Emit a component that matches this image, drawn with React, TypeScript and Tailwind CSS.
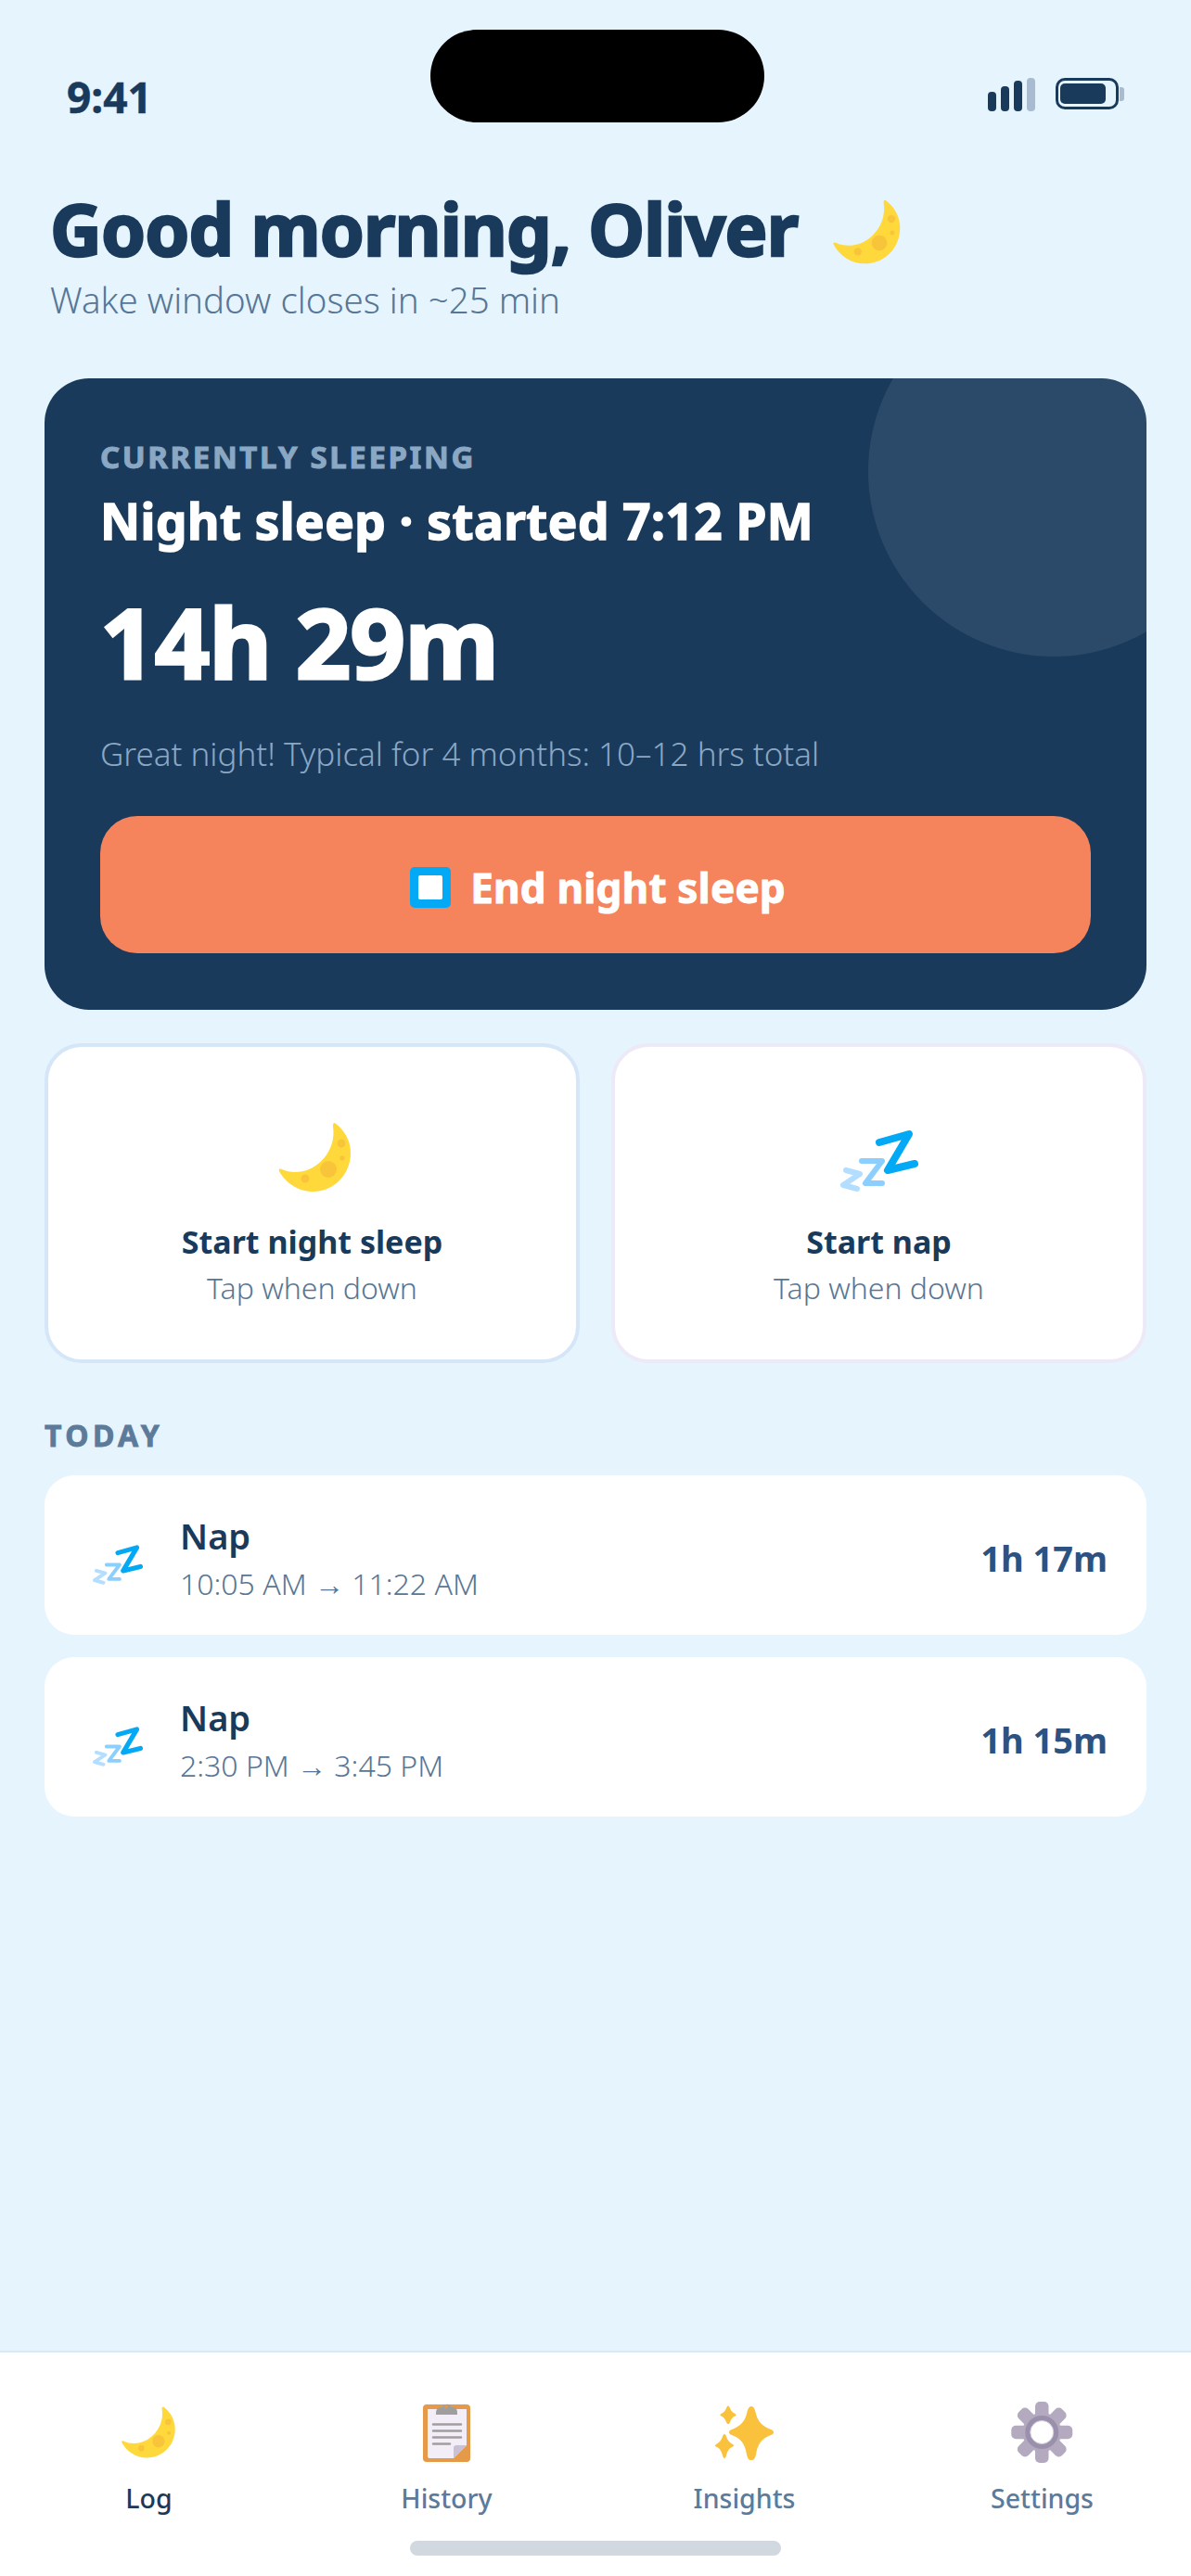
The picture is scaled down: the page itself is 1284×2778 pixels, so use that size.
const font = { fontFamily: '"Noto Sans", sans-serif' }

function Moon({ className }: { className: string }) {
  return (
    <svg viewBox="18 30 84 78" className={className}>
      <path d="M81 32C92 40 98 52 98 64C98 88 80 106 57 106C42 106 28 97 21 84C20 81 22 81 24 82C28 84 33 85 38 85C62 85 83 62 79 36C79 33 79 32 81 32Z" fill="#ffd83b" />
      <circle cx="74" cy="82" r="9" fill="#f8c53a" />
      <circle cx="88" cy="54" r="4.5" fill="#f8c53a" />
      <circle cx="89" cy="70" r="2.7" fill="#f8c53a" />
      <circle cx="49" cy="92" r="4.5" fill="#f8c53a" />
    </svg>
  )
}

function Zzz({ className }: { className: string }) {
  return (
    <svg viewBox="12 18 90 70" className={className} fill="none" strokeLinecap="round" strokeLinejoin="round">
      <path d="M21 63L36 67L18 79L33 83" stroke="#b3deff" strokeWidth="6" />
      <path d="M38 53H60L42 77H60" stroke="#8ccfff" strokeWidth="6" />
      <path d="M57 33L89 24L66 63L95 56" stroke="#03a9f4" strokeWidth="8" />
    </svg>
  )
}

function Clipboard({ className }: { className: string }) {
  return (
    <svg viewBox="22 18 60 68" className={className}>
      <rect x="26" y="22" width="51" height="62" rx="4" fill="#e59a4a" />
      <path d="M31 27H73V66L59 80H33Q31 80 31 78Z" fill="#f2edf7" />
      <path d="M59 80V69Q59 66 62 66H73Z" fill="#c8c0d6" />
      <path d="M40 31Q40 25 46 25H47A5.500 5.500 0 0 1 57 25H58Q63 25 63 31V33H40Z" fill="#9e9e9e" />
      <circle cx="51" cy="24" r="2" fill="#e59a4a" />
      <path d="M37 43.500H67M37 50.500H67M37 57.500H67M37 64.500H55" stroke="#9e9e9e" strokeWidth="2.500" strokeLinecap="round" />
    </svg>
  )
}

function Sparkles({ className }: { className: string }) {
  return (
    <svg viewBox="18 18 70 68" className={className} fill="#fac23c">
      <path d="M60 24C63 24 64 28 65 32C67 40 71 45 81 49C85 50 85 54 81 55C71 59 67 64 65 76C64 80 63 82 60 82C57 82 56 80 55 76C53 64 49 59 39 55C35 54 35 50 39 49C49 45 53 40 55 32C56 28 57 24 60 24Z" />
      <path d="M35 23.500C36 23.500 36.500 25 37 26C38 29 40 31 42.500 32C44 33 44 34 42.500 34.500C40 35.500 38 38 37 41C36.500 42.500 36 43 35 43C34 43 33.500 42.500 33 41C32 38 30 35.500 27.500 34.500C26 34 26 33 27.500 32C30 31 32 29 33 26C33.500 25 34 23.500 35 23.500Z" />
      <path d="M31 54C32 54 32.500 55 33 56.500C34 60 36 63 40 65C41.500 66 41.500 67 40 67.500C36 69 34 73 33 77C32.500 79 32 80 31 80C30 80 29.500 79 29 77C28 73 26 69 22 67.500C20.500 67 20.500 66 22 65C26 63 28 60 29 56.500C29.500 55 30 54 31 54Z" />
    </svg>
  )
}

function Gear({ className }: { className: string }) {
  const spokes = [0, 45, 90, 135, 180, 225, 270, 315]
  return (
    <svg viewBox="20 18 67 68" className={className}>
      {spokes.map((a) => (
        <rect key={a} x="46" y="19" width="14.500" height="24" rx="5" fill="#b3aac0" transform={`rotate(${a} 53.250 52)`} />
      ))}
      <circle cx="53.250" cy="52" r="21" fill="#b3aac0" />
      <circle cx="53.250" cy="52" r="18" fill="#9a90ab" />
      <circle cx="53.250" cy="52" r="12.500" fill="#fff" stroke="#cfc8da" strokeWidth="1" />
    </svg>
  )
}

function StartCard({ icon, title, border }: { icon: React.ReactNode; title: string; border: string }) {
  return (
    <div className={`flex h-[345px] flex-col items-center rounded-[40px] border-4 bg-white ${border}`}>
      <div className="mt-[78px] flex h-[82px] items-center justify-center">{icon}</div>
      <div className="mt-[27px] text-[34px] leading-[46px] font-bold text-[#1a3a5c]">{title}</div>
      <div className="mt-[7px] text-[32px] leading-[40px] font-light text-[#587695]">Tap when down</div>
    </div>
  )
}

function NapRow({ time, length }: { time: string; length: string }) {
  return (
    <div className="flex h-[172px] items-center rounded-[32px] bg-white pr-[42px] pl-[50px]">
      <Zzz className="mt-[20px] h-[45px] w-[58px] shrink-0" />
      <div className="ml-[38px] flex-1 pt-[6px]">
        <div className="text-[38px] leading-[48px] font-semibold text-[#1a3a5c]">Nap</div>
        <div className="mt-[8px] text-[32px] leading-[40px] font-light text-[#587695]">{time}</div>
      </div>
      <div className="pt-[6px] text-[38px] leading-[48px] font-bold text-[#2c5282]">{length}</div>
    </div>
  )
}

function NavItem({ icon, label, active }: { icon: React.ReactNode; label: string; active?: boolean }) {
  return (
    <div className="flex flex-1 flex-col items-center">
      <div className="flex h-[68px] items-center justify-center">{icon}</div>
      <div className={`mt-[17px] text-[28.5px] leading-[40px] font-medium ${active ? "text-[#1a3a5c]" : "text-[#5c7a99]"}`}>{label}</div>
    </div>
  )
}

export default function App() {
  return (
    <div style={font} className="flex h-[2778px] w-[1284px] flex-col overflow-hidden bg-[#e6f4fe] text-[#1a3a5c]">
      {/* Status bar */}
      <div className="relative flex h-[197px] shrink-0 items-start justify-between pt-[76px] pr-[72px] pl-[72px]">
        <div className="text-[46px] leading-[56px] font-bold [-webkit-text-stroke:0.5px_#1a3a5c]">9:41</div>
        <div className="absolute top-[32px] left-[464px] h-[100px] w-[360px] rounded-[50px] bg-black" />
        <div className="flex items-start gap-[22px] pt-[8px]">
          <div className="flex items-end gap-[5px]">
            <div className="h-[21px] w-[9px] rounded-[4px] bg-[#1a3a5c]" />
            <div className="h-[27px] w-[9px] rounded-[4px] bg-[#1a3a5c]" />
            <div className="h-[33px] w-[9px] rounded-[4px] bg-[#1a3a5c]" />
            <div className="h-[36px] w-[9px] rounded-[4px] bg-[#a9bbd0]" />
          </div>
          <div className="flex items-center gap-[1px]">
            <div className="flex h-[34px] w-[68px] items-center rounded-[10px] border-[3px] border-[#1a3a5c] pl-[2px]">
              <div className="h-[22px] w-[49px] rounded-[5px] bg-[#1a3a5c]" />
            </div>
            <div className="h-[15px] w-[5px] rounded-r-[3px] bg-[#a9bbd0]" />
          </div>
        </div>
      </div>

      {/* Greeting */}
      <div className="px-[54px]">
        <div className="flex items-center text-[77px] leading-[100px] font-bold tracking-[-0.85px] [-webkit-text-stroke:2.5px_#1a3a5c]">
          Good morning, Oliver
          <Moon className="mt-[6px] ml-[36px] h-[74px] w-[78px]" />
        </div>
        <div className="mt-[1px] text-[38.5px] leading-[50px] font-light text-[#587695]">Wake window closes in ~25 min</div>
      </div>

      <div className="mt-[60px] flex flex-col px-[48px]">
        {/* Current sleep */}
        <div className="relative h-[681px] overflow-hidden rounded-[48px] bg-[#1a3a5c] p-[60px]">
          <div className="absolute top-[-100px] right-[-100px] h-[400px] w-[400px] rounded-full bg-white/8" />
          <div className="relative">
            <div className="mt-[5px] text-[33px] leading-[40px] font-bold tracking-[2.6px] text-[#8aa8c4] [-webkit-text-stroke:1px_#8aa8c4]">CURRENTLY SLEEPING</div>
            <div className="mt-[14px] text-[53px] leading-[70px] font-bold tracking-[0.5px] text-white [-webkit-text-stroke:1.5px_#fff]">Night sleep · started 7:12 PM</div>
            <div className="mt-[30px] text-[104px] leading-[130px] font-bold tracking-[-0.7px] text-white [-webkit-text-stroke:3px_#fff]">14h 29m</div>
            <div className="mt-[33px] text-[35px] leading-[46px] font-light text-[#8aa8c4]">Great night! Typical for 4 months: 10–12 hrs total</div>
            <div className="mt-[44px] flex h-[148px] items-center justify-center rounded-[40px] bg-[#f5845c] pt-[6px] pl-[5px]">
              <div className="flex h-[44px] w-[44px] items-center justify-center rounded-[5px] bg-[#03a9f4]">
                <div className="h-[26px] w-[26px] rounded-[2px] bg-white" />
              </div>
              <span className="ml-[21px] text-[44px] leading-[60px] font-bold tracking-[0.2px] text-white [-webkit-text-stroke:1px_#fff]">End night sleep</span>
            </div>
          </div>
        </div>

        {/* Start buttons */}
        <div className="mt-[36px] grid grid-cols-2 gap-[34px]">
          <StartCard icon={<Moon className="ml-[6px] h-[78px] w-[84px]" />} title="Start night sleep" border="border-[#d4e6f7]" />
          <StartCard icon={<Zzz className="mt-[8px] h-[70px] w-[90px]" />} title="Start nap" border="border-[#ede9f6]" />
        </div>

        {/* Today */}
        <div className="mt-[57px] text-[32px] leading-[42px] font-bold tracking-[4.4px] text-[#5c7a99] [-webkit-text-stroke:0.8px_#5c7a99]">TODAY</div>
        <div className="mt-[22px] flex flex-col gap-[24px]">
          <NapRow time="10:05 AM → 11:22 AM" length="1h 17m" />
          <NapRow time="2:30 PM → 3:45 PM" length="1h 15m" />
        </div>
      </div>

      {/* Bottom nav */}
      <div className="relative mt-auto h-[243px] shrink-0 border-t-2 border-[#d8e8f5] bg-white pt-[52px]">
        <div className="flex">
          <NavItem icon={<Moon className="h-[58px] w-[63px]" />} label="Log" active />
          <NavItem icon={<Clipboard className="h-[68px] w-[60px]" />} label="History" />
          <NavItem icon={<Sparkles className="h-[68px] w-[70px]" />} label="Insights" />
          <NavItem icon={<Gear className="h-[68px] w-[67px]" />} label="Settings" />
        </div>
        <div className="absolute bottom-[22px] left-[442px] h-[16px] w-[400px] rounded-[8px] bg-[#d1d8e0]" />
      </div>
    </div>
  )
}
